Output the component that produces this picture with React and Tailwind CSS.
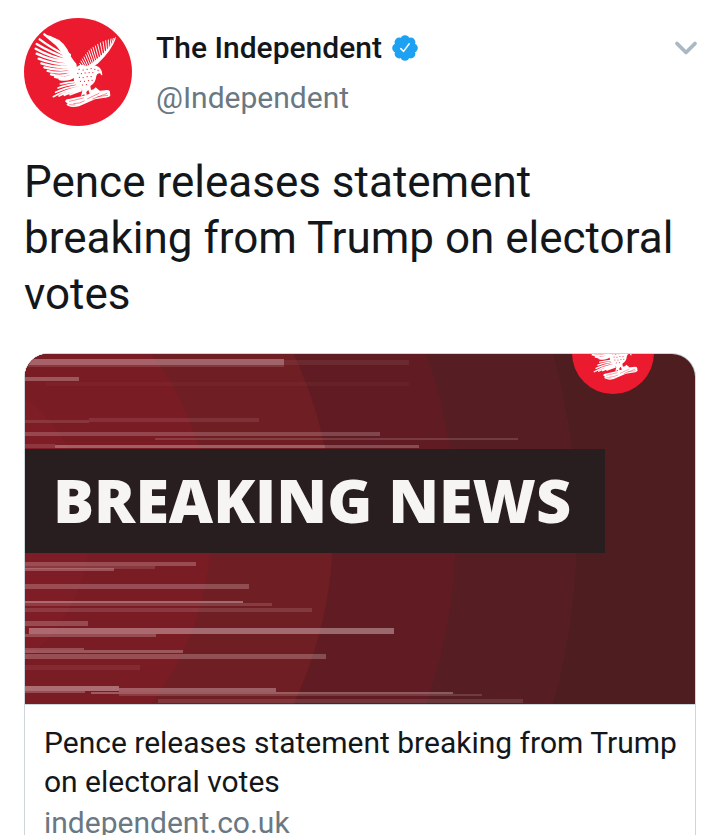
import React from 'react';
import { ChevronDown } from 'lucide-react';

// [x, y, width, height, opacity]
const streaks = [
  [0, 5, 259, 6, 0.36],
  [0, 11, 259, 2, 0.14],
  [259, 6, 125, 5, 0.07],
  [0, 23, 54, 4, 0.3],
  [21, 28, 363, 4, 0.03],
  [64, 64, 170, 4, 0.11],
  [0, 66, 64, 3, 0.13],
  [0, 78, 355, 4, 0.22],
  [130, 84, 363, 2, 0.16],
  [0, 90, 30, 4, 0.14],
  [30, 91, 270, 3, 0.34],
  [300, 91, 94, 3, 0.26],
  [0, 208, 171, 4, 0.25],
  [0, 212, 130, 3, 0.14],
  [0, 214, 89, 3, 0.28],
  [0, 230, 224, 5, 0.25],
  [0, 247, 218, 2, 0.4],
  [0, 249, 247, 3, 0.16],
  [0, 254, 287, 4, 0.15],
  [0, 267, 63, 5, 0.24],
  [4, 274, 365, 6, 0.4],
  [0, 280, 131, 3, 0.25],
  [0, 294, 59, 2, 0.25],
  [0, 296, 158, 3, 0.3],
  [0, 300, 301, 5, 0.26],
  [0, 311, 115, 5, 0.08],
  [0, 332, 94, 5, 0.42],
  [94, 334, 157, 4, 0.34],
  [0, 337, 60, 2, 0.25],
  [66, 338, 362, 2, 0.32],
  [94, 340, 363, 2, 0.16],
  [133, 345, 365, 4, 0.13],
];

const rings = [
  [652, '#561e22'],
  [531, '#601c22'],
  [408, '#6f1e23'],
  [286, '#7a1c24'],
  [165, '#7e1d25'],
];

const EagleLogo = ({ className }) => (
  <svg viewBox="27 24 324 324" className={className} aria-hidden="true">
    <circle cx="189" cy="186" r="162" fill="#ec1a2e" />
    <g fill="none" stroke="#fff" strokeLinecap="round">
      <path
        strokeWidth="7"
        d="M165 135Q125 105 88 73M160 140Q112 116 74 88M160 146Q104 126 65 102M162 152Q104 140 62 116M165 158Q108 152 65 131M168 164Q114 164 71 146M170 170Q120 174 79 160M173 176Q126 184 88 172M176 181Q134 194 98 183M178 186Q142 203 108 193M180 191Q150 210 120 201M182 196Q160 214 134 207"
      />
      <path
        strokeWidth="5"
        d="M186 214Q155 218 136 222M188 220Q150 225 129 234M190 226Q148 234 122 247M192 231Q150 240 115 260M194 235Q160 242 132 258M196 239Q170 245 148 256M198 242Q180 248 165 254"
      />
      <path
        strokeWidth="3"
        d="M296 94L301 83M290 103L295 85M285 110L288 87M280 116L280 90M275 122L272 92M269 128L264 95M263 134L256 99M257 140L248 103M251 145L241 108M245 150L234 112M240 154L228 117M235 158L222 122M230 162L217 128M225 166L212 134M220 170L207 141M216 173L202 147M212 176L198 153M208 179L194 160"
      />
    </g>
    <g fill="#fff">
      <path d="M88 73Q138 83 157 118Q168 145 184 161L190 200L168 196L146 140Q126 103 88 73Z" />
      <path d="M303 84Q290 122 248 161L212 184L205 176Q266 140 303 84Z" />
      <path d="M178 180Q195 155 216 170Q233 162 250 170Q262 178 262 195Q258 198 256 190Q246 188 244 198Q242 220 226 228L228 240L236 238L242 232L255 243L246 246L242 258L234 250L226 257L220 240L214 246L216 262L207 253L198 259L202 242L190 230Q170 220 178 180Z" />
      <path d="M150 274Q153 266 162 267L206 257L250 243L276 240Q286 240 285 248L286 257Q280 263 264 264L240 268L192 289Q172 294 160 288Q150 283 158 281Z" />
    </g>
    <g fill="none" stroke="#ec1a2e" strokeLinecap="round">
      <path
        strokeWidth="1.5"
        d="M164 274L205 264M176 281Q195 281 208 273M218 266L252 250M233 267L276 250M164 284L180 285M248 260L278 256"
      />
      <path
        strokeWidth="3"
        d="M192 178h1M204 180h1M216 178h1M228 176h1M239 178h1M188 190h1M199 191h1M210 189h1M222 188h1M233 188h1M193 202h1M204 203h1M216 200h1M228 200h1M196 214h1M208 214h1M220 212h1M231 211h1M202 225h1M214 224h1"
      />
      <path strokeWidth="2" d="M248 181h3" />
    </g>
  </svg>
);

const VerifiedBadge = () => (
  <svg viewBox="0 0 26 26" className="size-[26px] shrink-0" role="img" aria-label="Verified account">
    <g fill="#1da1f2">
      <circle cx="13" cy="13" r="10" />
      <circle cx="13" cy="4.8" r="4.6" />
      <circle cx="18.8" cy="7.2" r="4.6" />
      <circle cx="21.2" cy="13" r="4.6" />
      <circle cx="18.8" cy="18.8" r="4.6" />
      <circle cx="13" cy="21.2" r="4.6" />
      <circle cx="7.2" cy="18.8" r="4.6" />
      <circle cx="4.8" cy="13" r="4.6" />
      <circle cx="7.2" cy="7.2" r="4.6" />
    </g>
    <path d="M8.8 13.6l2.8 2.8 5.6-7.6" fill="none" stroke="#fff" strokeWidth="1.5" strokeLinecap="round" strokeLinejoin="round" />
  </svg>
);

const BreakingArtwork = () => (
  <div className="relative h-[350px] overflow-hidden bg-[#4e1d20] pt-[95px]">
    <svg viewBox="0 0 670 350" preserveAspectRatio="xMinYMin slice" className="absolute inset-0 h-full w-full" aria-hidden="true">
      {rings.map(([r, fill]) => (
        <circle key={r} cx="-100" cy="175" r={r} fill={fill} />
      ))}
      {streaks.map(([x, y, width, height, opacity], i) => (
        <rect key={i} x={x} y={y} width={width} height={height} fill="#f3dfe2" opacity={opacity} />
      ))}
    </svg>
    <EagleLogo className="absolute -top-[42px] right-[41px] size-[82px]" />
    <div className="relative flex h-[104px] w-[580px] items-center bg-[#281e1f] pb-1 pl-7">
      <span className="font-['Open_Sans',sans-serif] text-[61px] leading-none font-extrabold whitespace-nowrap text-[#f6f5f4]">BREAKING NEWS</span>
    </div>
  </div>
);

const TweetHeader = () => (
  <header className="flex items-start">
    <EagleLogo className="size-[108px] shrink-0" />
    <div className="ml-6 flex-1 pt-2">
      <div className="flex items-center gap-2.5">
        <span className="text-[30px] leading-[44px] font-medium text-[#14171a]">The Independent</span>
        <VerifiedBadge />
      </div>
      <a href="#profile" className="block text-[30px] leading-[56px] text-[#697882]">
        @Independent
      </a>
    </div>
    <button type="button" aria-label="More options" className="mt-3 -mr-2 text-[#aab8c2]">
      <ChevronDown className="size-9" strokeWidth={2.5} />
    </button>
  </header>
);

const App = () => {
  return (
    <main className="min-h-screen bg-white px-6 pt-[18px] font-[Roboto,sans-serif]">
      <TweetHeader />
      <p className="mt-7 text-[44px] leading-[56px] text-[#14171a]">
        Pence releases statement breaking from Trump on electoral votes
      </p>
      <a href="#article" className="mt-[31px] block overflow-hidden rounded-3xl border border-[#ccd6dd]">
        <BreakingArtwork />
        <div className="border-t border-[#ccd6dd] pt-[18px] pr-3 pb-5 pl-[19px] text-[30px] leading-[39px]">
          <h2 className="text-[#14171a]">Pence releases statement breaking from Trump on electoral votes</h2>
          <p className="mt-0.5 text-[#697882]">independent.co.uk</p>
        </div>
      </a>
    </main>
  );
};

export default App;
